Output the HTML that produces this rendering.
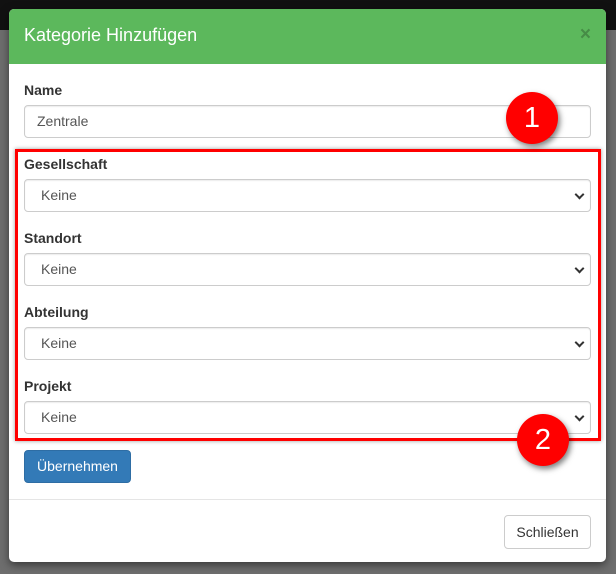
<!DOCTYPE html>
<html><head><style>
body{margin:0;width:616px;height:574px;overflow:hidden;background:#6e6e6e;font-family:"Liberation Sans",sans-serif;position:relative}
.topbar{position:absolute;left:0;top:0;width:616px;height:30px;background:#111}
.modal{position:absolute;left:9px;top:9px;width:597px;height:553px;background:#fff;border-radius:5px;box-shadow:0 3px 9px rgba(0,0,0,.5);overflow:hidden}
.hdr{height:55px;background:#5cb85c;color:#fff;font-size:18px;line-height:52px;padding-left:15px;position:relative}
.x{position:absolute;right:15px;top:0;font-size:19px;font-weight:bold;color:#3d7a3d;opacity:.7}
.lbl{position:absolute;left:15px;font-size:14px;font-weight:bold;color:#333}
.inp{position:absolute;left:15px;width:567px;height:33px;border:1px solid #ccc;border-radius:4px;box-sizing:border-box;font-size:14px;color:#555;line-height:31px;box-shadow:inset 0 1px 1px rgba(0,0,0,.075)}
.sel{padding-left:16px}
.sel:after{content:"";position:absolute;right:7px;top:11px;width:5px;height:5px;border-right:2px solid #333;border-bottom:2px solid #333;transform:rotate(45deg)}
.red{position:absolute;left:6px;top:140px;width:580px;height:286px;border:3px solid #f00;box-shadow:0 0 4px rgba(0,0,0,.4)}
.btn{position:absolute;font-size:14px;border-radius:4px;box-sizing:border-box;text-align:center}
.badge{position:absolute;width:52px;height:52px;border-radius:50%;background:#f00;color:#fff;font-size:29px;text-align:center;line-height:52px;box-shadow:2px 3px 6px rgba(0,0,0,.5)}
</style></head><body>
<div class="topbar"></div>
<div class="modal">
<div class="hdr">Kategorie Hinzufügen<span class="x">×</span></div>
<div class="lbl" style="top:73px">Name</div>
<div class="inp" style="top:96px;padding-left:12px">Zentrale</div>
<div class="red"></div>
<div class="lbl" style="top:147px">Gesellschaft</div>
<div class="inp sel" style="top:170px">Keine</div>
<div class="lbl" style="top:221px">Standort</div>
<div class="inp sel" style="top:244px">Keine</div>
<div class="lbl" style="top:295px">Abteilung</div>
<div class="inp sel" style="top:318px">Keine</div>
<div class="lbl" style="top:369px">Projekt</div>
<div class="inp sel" style="top:392px">Keine</div>
<div class="btn" style="left:15px;top:441px;width:107px;height:33px;background:#337ab7;border:1px solid #2e6da4;color:#fff;line-height:31px">Übernehmen</div>
<div style="position:absolute;left:0;top:490px;width:597px;border-top:1px solid #e5e5e5"></div>
<div class="btn" style="left:495px;top:506px;width:87px;height:34px;border:1px solid #ccc;color:#333;line-height:32px">Schließen</div>
</div>
<div class="badge" style="left:506px;top:92px">1</div>
<div class="badge" style="left:517px;top:414px">2</div>
</body></html>
